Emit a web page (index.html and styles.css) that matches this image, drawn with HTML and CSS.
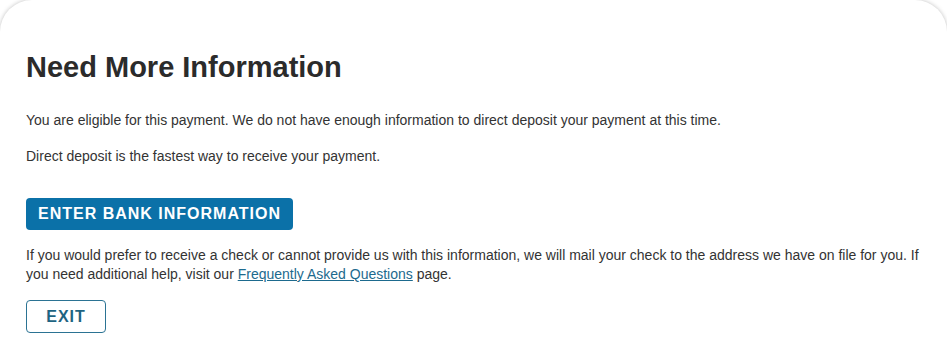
FILE: index.html
```html
<!DOCTYPE html>
<html lang="en">
<head>
    <meta charset="UTF-8">
    <meta name="viewport" content="width=device-width, initial-scale=1.0">
    <title>Need More Information</title>
    <link rel="stylesheet" href="styles.css">
</head>
<body>
    <div class="info-card">
        <h1>Need More Information</h1>
        <p>You are eligible for this payment. We do not have enough information to direct deposit your payment at this time.</p>
        <p>Direct deposit is the fastest way to receive your payment.</p>
        <button type="button" class="btn-primary">Enter Bank Information</button>
        <p class="note">If you would prefer to receive a check or cannot provide us with this information, we will mail your check to the address we have on file for you. If you need additional help, visit our <a href="#">Frequently Asked Questions</a> page.</p>
        <button type="button" class="btn-outline">Exit</button>
    </div>
</body>
</html>
```

FILE: styles.css
```css
body {
    font-family: "Liberation Sans", Arial, sans-serif;
    margin: 0;
    padding: 0;
    background-color: #fff;
    color: #333;
}
.info-card {
    background: #fff;
    border-radius: 32px 32px 0 0;
    box-shadow: 0 0 4px rgba(0, 0, 0, 0.25);
    min-height: 353px;
    box-sizing: border-box;
    padding: 51px 26px 0 26px;
}
.info-card h1 {
    font-size: 29px;
    font-weight: bold;
    color: #2b2b2b;
    margin: 0 0 28px 0;
    line-height: 32px;
}
.info-card p {
    font-size: 14px;
    line-height: 19px;
    margin: 0 0 17px 0;
}
.info-card p.note {
    margin: 0 0 16px 0;
}
.info-card a {
    color: #1d6a8e;
}
.btn-primary {
    display: block;
    font-family: inherit;
    font-size: 16px;
    font-weight: bold;
    letter-spacing: 1px;
    text-transform: uppercase;
    color: #fff;
    background-color: #0b71a8;
    border: none;
    border-radius: 4px;
    padding: 7px 12px 7px 12px;
    margin: 32px 0 16px 0;
    cursor: pointer;
}
.btn-outline {
    display: block;
    font-family: inherit;
    font-size: 16px;
    font-weight: bold;
    letter-spacing: 1px;
    text-transform: uppercase;
    color: #1e6482;
    background-color: #fff;
    border: 1px solid #2b7393;
    border-radius: 4px;
    width: 80px;
    height: 33px;
    cursor: pointer;
}
```
